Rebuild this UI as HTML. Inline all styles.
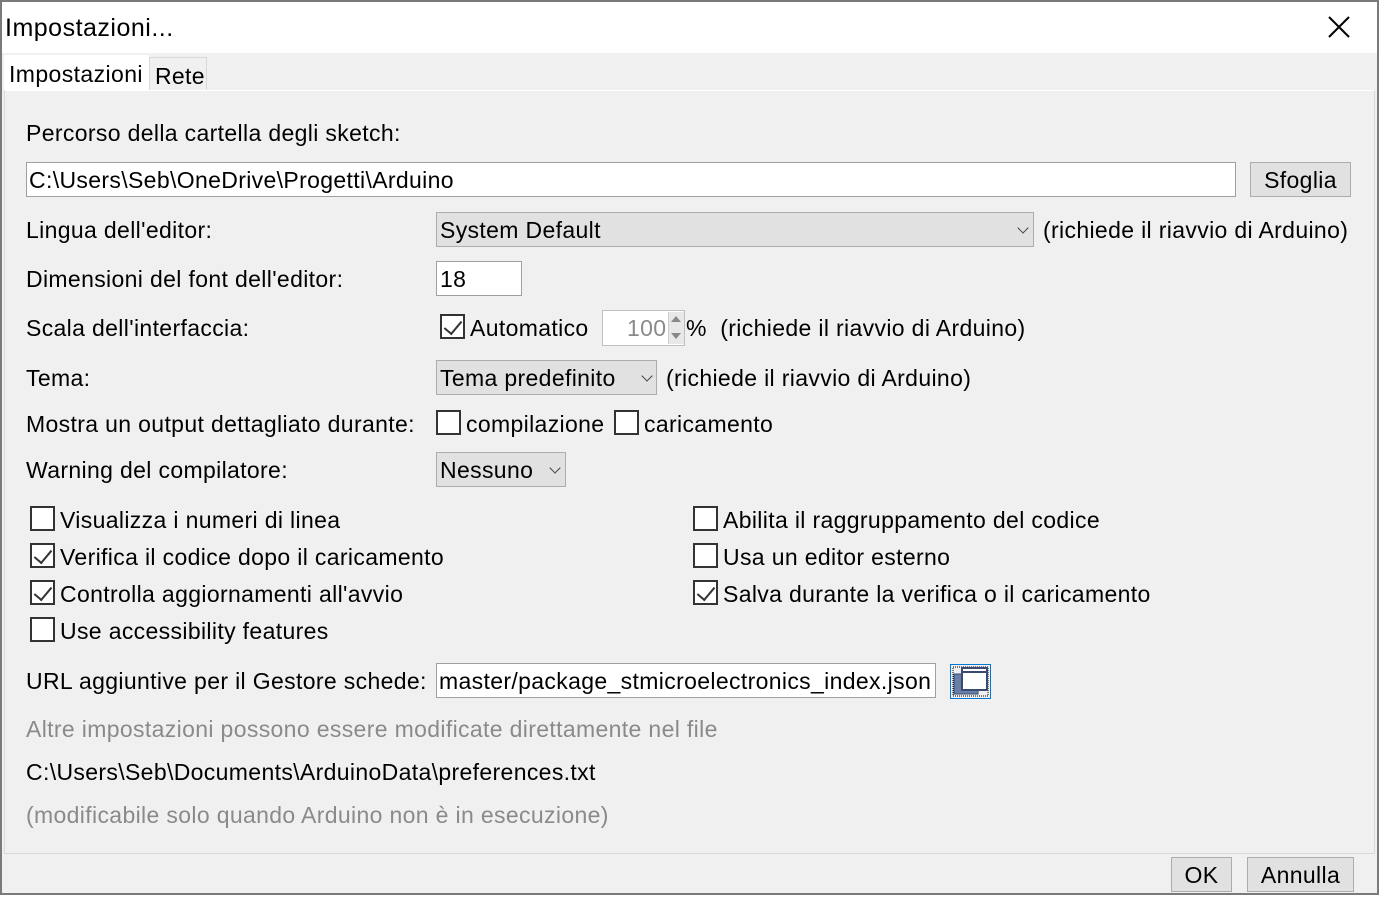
<!DOCTYPE html>
<html><head><meta charset="utf-8"><style>
*{margin:0;padding:0;box-sizing:border-box}
body{width:1389px;height:902px;background:#fff;font-family:"Liberation Sans",sans-serif;font-size:23px;letter-spacing:0.35px;color:#000;position:relative;overflow:hidden}
.a{position:absolute;white-space:nowrap}
.win{position:absolute;left:0;top:0;width:1379px;height:895px;border:2px solid #7a7a7a;background:#f0f0f0}
.field{position:absolute;background:#fff;border:1px solid #a0a0a0}
.btn{position:absolute;background:#e1e1e1;border:1px solid #adadad;text-align:center}
.combo{position:absolute;background:#e1e1e1;border:1px solid #adadad}
.cb{position:absolute;width:25px;height:25px;border:2px solid #333;background:#fff}
.cb.c::after{content:"";position:absolute;left:6px;top:1px;width:8px;height:15px;border-right:2px solid #333;border-bottom:2px solid #333;transform:rotate(40deg)}
.chev{position:absolute;width:8px;height:8px;border-right:1.5px solid #444;border-bottom:1.5px solid #444;transform:rotate(45deg)}
.g{color:#8a8a8a}
</style></head><body>
<div class="win"></div>
<div class="a" style="left:2px;top:2px;width:1375px;height:51px;background:#fff"></div>
<div class="a" style="left:5px;top:14px;font-size:25px;letter-spacing:0.5px">Impostazioni...</div>
<svg class="a" style="left:1328px;top:16px" width="22" height="22"><path d="M1 1L21 21M21 1L1 21" stroke="#000" stroke-width="2"/></svg>
<div class="a" style="left:4px;top:55px;width:145px;height:38px;background:#fff"></div>
<div class="a" style="left:149px;top:57px;width:58px;height:34px;border:1px solid #d9d9d9;border-bottom:none"></div>
<div class="a" style="left:9px;top:61px;font-size:23px;letter-spacing:0.4px">Impostazioni</div>
<div class="a" style="left:155px;top:63px;font-size:23px;letter-spacing:0.3px">Rete</div>
<div class="a" style="left:4px;top:90px;width:1371px;height:764px;border:1px solid #d9d9d9;border-top:1px solid #fff;background:#f0f0f0"></div>
<div class="a" style="left:26px;top:120px">Percorso della cartella degli sketch:</div>
<div class="field" style="left:26px;top:162px;width:1210px;height:35px"></div>
<div class="a" style="left:29px;top:167px">C:\Users\Seb\OneDrive\Progetti\Arduino</div>
<div class="btn" style="left:1250px;top:162px;width:101px;height:35px;padding-top:4px">Sfoglia</div>
<div class="a" style="left:26px;top:217px">Lingua dell'editor:</div>
<div class="combo" style="left:436px;top:212px;width:598px;height:35px"></div>
<div class="a" style="left:440px;top:217px">System Default</div>
<div class="chev" style="left:1019px;top:224px"></div>
<div class="a" style="left:1043px;top:217px">(richiede il riavvio di Arduino)</div>
<div class="a" style="left:26px;top:266px">Dimensioni del font dell'editor:</div>
<div class="field" style="left:436px;top:261px;width:86px;height:35px"></div>
<div class="a" style="left:440px;top:266px">18</div>
<div class="a" style="left:26px;top:315px">Scala dell'interfaccia:</div>
<div class="cb c" style="left:440px;top:314px"></div>
<div class="a" style="left:470px;top:315px">Automatico</div>
<div class="field" style="left:602px;top:310px;width:83px;height:36px;border-color:#c0c0c0"></div>
<div class="a g" style="left:627px;top:315px">100</div>
<div class="a" style="left:668px;top:312px;width:16px;height:32px;background:#e8e8e8;border-left:1px solid #ccc"></div>
<div class="a" style="left:671px;top:316px;border:5px solid transparent;border-bottom:6px solid #888;border-top:none"></div>
<div class="a" style="left:671px;top:333px;border:5px solid transparent;border-top:6px solid #888;border-bottom:none"></div>
<div class="a" style="left:686px;top:315px">%&nbsp; (richiede il riavvio di Arduino)</div>
<div class="a" style="left:26px;top:365px">Tema:</div>
<div class="combo" style="left:436px;top:360px;width:221px;height:35px"></div>
<div class="a" style="left:440px;top:365px">Tema predefinito</div>
<div class="chev" style="left:643px;top:372px"></div>
<div class="a" style="left:666px;top:365px">(richiede il riavvio di Arduino)</div>
<div class="a" style="left:26px;top:411px">Mostra un output dettagliato durante:</div>
<div class="cb" style="left:436px;top:410px"></div>
<div class="a" style="left:466px;top:411px">compilazione</div>
<div class="cb" style="left:614px;top:410px"></div>
<div class="a" style="left:644px;top:411px">caricamento</div>
<div class="a" style="left:26px;top:457px">Warning del compilatore:</div>
<div class="combo" style="left:436px;top:452px;width:130px;height:35px"></div>
<div class="a" style="left:440px;top:457px">Nessuno</div>
<div class="chev" style="left:551px;top:464px"></div>
<div class="cb" style="left:30px;top:506px"></div><div class="a" style="left:60px;top:507px">Visualizza i numeri di linea</div>
<div class="cb c" style="left:30px;top:543px"></div><div class="a" style="left:60px;top:544px">Verifica il codice dopo il caricamento</div>
<div class="cb c" style="left:30px;top:580px"></div><div class="a" style="left:60px;top:581px">Controlla aggiornamenti all'avvio</div>
<div class="cb" style="left:30px;top:617px"></div><div class="a" style="left:60px;top:618px">Use accessibility features</div>
<div class="cb" style="left:693px;top:506px"></div><div class="a" style="left:723px;top:507px">Abilita il raggruppamento del codice</div>
<div class="cb" style="left:693px;top:543px"></div><div class="a" style="left:723px;top:544px">Usa un editor esterno</div>
<div class="cb c" style="left:693px;top:580px"></div><div class="a" style="left:723px;top:581px">Salva durante la verifica o il caricamento</div>
<div class="a" style="left:26px;top:668px">URL aggiuntive per il Gestore schede:</div>
<div class="field" style="left:436px;top:663px;width:500px;height:35px;overflow:hidden"><div class="a" style="left:2px;top:4px">master/package_stmicroelectronics_index.json</div></div>
<svg class="a" style="left:950px;top:664px" width="41" height="35"><rect x="0.5" y="0.5" width="40" height="34" fill="#f0f0f0" stroke="#0078d7"/><rect x="3" y="3" width="35" height="29" fill="none" stroke="#000" stroke-dasharray="1 1"/><rect x="4" y="10" width="24" height="20" fill="#6a7fa8" stroke="#3a4a70"/><rect x="12" y="4" width="25" height="22" fill="#fff" stroke="#3a4a70" stroke-width="2"/><line x1="12" y1="8" x2="37" y2="8" stroke="#3a4a70" stroke-width="2"/></svg>
<div class="a g" style="left:26px;top:716px">Altre impostazioni possono essere modificate direttamente nel file</div>
<div class="a" style="left:26px;top:759px">C:\Users\Seb\Documents\ArduinoData\preferences.txt</div>
<div class="a g" style="left:26px;top:802px">(modificabile solo quando Arduino non è in esecuzione)</div>
<div class="btn" style="left:1171px;top:857px;width:61px;height:35px;padding-top:4px">OK</div>
<div class="btn" style="left:1247px;top:857px;width:107px;height:35px;padding-top:4px">Annulla</div>
</body></html>
